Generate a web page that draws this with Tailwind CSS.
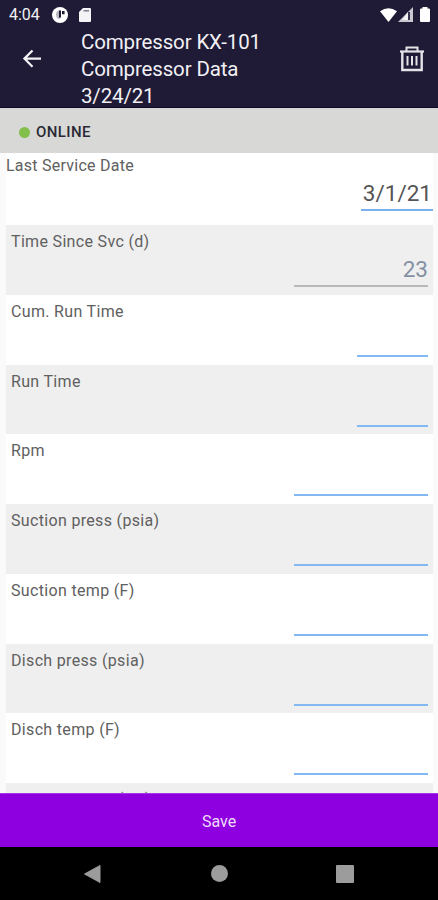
<!DOCTYPE html>
<html lang="en">
<head>
<meta charset="utf-8">
<title>Compressor Data</title>
<script src="https://cdn.jsdelivr.net/npm/@tailwindcss/browser@4"></script>
</head>
<body class="w-[438px] h-[900px] overflow-hidden flex flex-col bg-[#fafafa] font-['Roboto',sans-serif]">
<header class="h-[108px] shrink-0 bg-[#1f1a35] text-[#f1f0f4] border-b border-[#0e0a22]">
  <div class="h-[29px] flex items-center pl-[9px] pr-[8px]">
    <span class="text-[16px] leading-[29px] w-[43px]">4:04</span>
    <svg class="w-4 h-4" viewBox="0 0 16 16"><circle cx="8" cy="8" r="8" fill="#fff"/><path d="M6.500 3.500h2.300v6.300a2.200 2.200 0 0 1-2.300 2.200c-1.700-1-2.500-2.500-2.500-4.500s1-3.400 2.500-4z" fill="#b9b7c2"/><path d="M7 3.500h2v7H7zM10 4h2.600v3.200H10z" fill="#1f1a35"/></svg>
    <svg class="w-3 h-[14px] ml-[11px]" viewBox="0 0 12 14"><path d="M4 0h7a1 1 0 0 1 1 1v12a1 1 0 0 1-1 1H1a1 1 0 0 1-1-1V4z" fill="#f4f3f6"/><path d="M4.500 2.800H10" stroke="#77738a" stroke-width="1.400"/></svg>
    <svg class="w-[17px] h-[14px] ml-auto" viewBox="0 0 17 14"><path d="M0 3.200Q8.500-2.800 17 3.200L8.500 14z" fill="#fff"/></svg>
    <svg class="w-[15px] h-[15px] ml-[1px]" viewBox="0 0 15 15"><path d="M15 0v15H0z" fill="#c9c7cf"/><path d="M10 5v8H4z" fill="#f4f3f6"/><path d="M10 5h2v8h-2z" fill="#3a3550"/></svg>
    <svg class="w-[10px] h-[15px] ml-[7px]" viewBox="0 0 10 15"><path d="M2.500 0h5v1.500H9a1 1 0 0 1 1 1V14a1 1 0 0 1-1 1H1a1 1 0 0 1-1-1V2.500a1 1 0 0 1 1-1h1.500z" fill="#fff"/></svg>
  </div>
  <div class="flex items-start pl-[22px] pr-[14px]">
    <svg class="w-5 h-5 mt-5" viewBox="0 0 20 20" fill="none" stroke="#f4f3f6" stroke-width="2.200"><path d="M19 9.600H3M10.500 1.500L2.400 9.600l8.100 8.100"/></svg>
    <h1 class="ml-[39px] text-[20.500px] leading-[27px] tracking-[-0.150px]">Compressor KX-101<br>Compressor Data<br>3/24/21</h1>
    <svg class="w-6 h-[26px] ml-auto mt-[17px]" viewBox="0 0 24 26" fill="none" stroke="#e4e3e8"><path d="M0 5.500h24" stroke-width="2.200"/><path d="M6.500 5V1.500h11V5" stroke-width="2"/><path d="M2.300 6v18h19.400V6" stroke-width="2.400"/><path d="M7.500 10v9.500M12 10v9.500M16.500 10v9.500" stroke-width="2"/></svg>
  </div>
</header>
<div class="h-[45px] shrink-0 bg-[#d8d9d7] flex items-center pl-[19px] pt-[3px]">
  <span class="w-[11px] h-[11px] rounded-full bg-[#83bf4b]"></span>
  <span class="ml-[6px] text-[15px] tracking-[0.400px] font-medium text-[#2a2935]">ONLINE</span>
</div>
<main class="flex-1 min-h-0 overflow-hidden pl-[6px] pr-[5px] text-[16px] leading-[20px] text-[#606060] tracking-[0.330px]">
  <section class="h-[72px] bg-white flex flex-col pt-[3px]">
    <span class="tracking-[0.250px]">Last Service Date</span>
    <span class="self-end w-[72px] h-[35px] border-b-2 border-[#79b0ee] text-right text-[22.500px] leading-[35px] text-[#555] tracking-normal pr-px">3/1/21</span>
  </section>
  <section class="h-[69.750px] bg-[#efefef] flex flex-col pt-[7px] px-[5px]">
    <span>Time Since Svc (d)</span>
    <span class="self-end w-[134px] h-[35px] border-b-2 border-[#b9b9b9] text-right text-[22.500px] leading-[35px] text-[#8490a2] tracking-normal">23</span>
  </section>
  <section class="h-[69.750px] bg-white flex flex-col pt-[7px] px-[5px]"><span>Cum. Run Time</span><span class="self-end w-[71px] h-[35px] border-b-2 border-[#83b9f2]"></span></section>
  <section class="h-[69.750px] bg-[#efefef] flex flex-col pt-[7px] px-[5px]"><span>Run Time</span><span class="self-end w-[71px] h-[35px] border-b-2 border-[#83b9f2]"></span></section>
  <section class="h-[69.750px] bg-white flex flex-col pt-[7px] px-[5px]"><span>Rpm</span><span class="self-end w-[134px] h-[35px] border-b-2 border-[#83b9f2]"></span></section>
  <section class="h-[69.750px] bg-[#efefef] flex flex-col pt-[7px] px-[5px]"><span>Suction press (psia)</span><span class="self-end w-[134px] h-[35px] border-b-2 border-[#83b9f2]"></span></section>
  <section class="h-[69.750px] bg-white flex flex-col pt-[7px] px-[5px]"><span>Suction temp (F)</span><span class="self-end w-[134px] h-[35px] border-b-2 border-[#83b9f2]"></span></section>
  <section class="h-[69.750px] bg-[#efefef] flex flex-col pt-[7px] px-[5px]"><span>Disch press (psia)</span><span class="self-end w-[134px] h-[35px] border-b-2 border-[#83b9f2]"></span></section>
  <section class="h-[69.750px] bg-white flex flex-col pt-[7px] px-[5px]"><span>Disch temp (F)</span><span class="self-end w-[134px] h-[35px] border-b-2 border-[#83b9f2]"></span></section>
  <section class="h-[69.750px] bg-[#efefef] flex flex-col pt-[7px] px-[5px]"><span class="tracking-[0.200px]">Comp Gas var (psi)</span></section>
</main>
<button class="h-[54px] shrink-0 bg-[#8e00df] text-[#f0dcfb] text-[16px] pt-[3px] border-t border-[#a535e6]">Save</button>
<nav class="h-[53px] shrink-0 bg-black flex items-center pl-[84px] pr-[84px] justify-between">
  <svg class="w-[17px] h-[18px]" viewBox="0 0 17 18"><path d="M16 .5v17L.5 9z" fill="#9c9c9c" stroke="#9c9c9c" stroke-linejoin="round"/></svg>
  <span class="w-[17px] h-[17px] ml-[2px] rounded-full bg-[#9c9c9c]"></span>
  <span class="w-[18px] h-[18px] rounded-[1px] bg-[#9c9c9c]"></span>
</nav>
</body>
</html>
